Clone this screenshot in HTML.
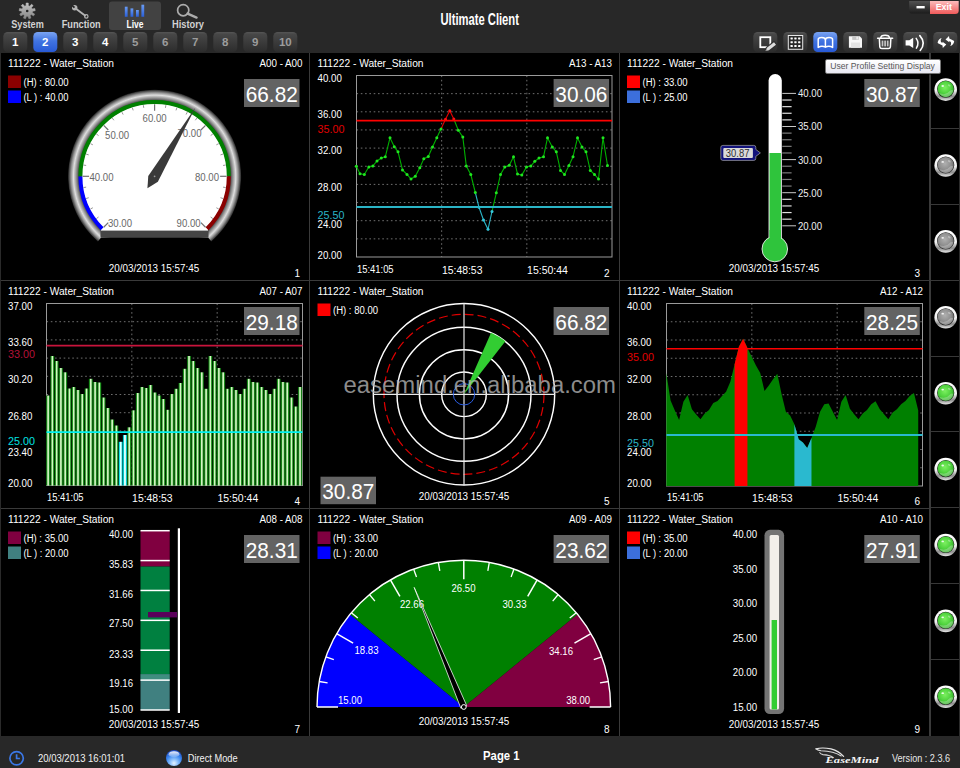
<!DOCTYPE html><html><head><meta charset="utf-8"><title>Ultimate Client</title><style>

html,body{margin:0;padding:0;background:#282828;}
body{width:960px;height:768px;overflow:hidden;position:relative;font-family:"Liberation Sans",sans-serif;color:#fff;}
svg{display:block;font-family:"Liberation Sans",sans-serif;}
#header{position:absolute;left:0;top:0;width:960px;height:53px;background:#282828;}
#main{position:absolute;left:0;top:53px;width:960px;height:683px;background:#3a3a3a;}
.panel{position:absolute;width:309px;height:227px;background:#000;overflow:hidden;}
.ledcol{position:absolute;left:931px;top:53px;width:28px;height:683px;background:#000;}
#footer{position:absolute;left:0;top:736px;width:960px;height:32px;background:#282828;}
#edgeR{position:absolute;left:959px;top:53px;width:1px;height:683px;background:#2c2c2c;}
#edgeL{position:absolute;left:0;top:53px;width:1px;height:683px;background:#2a2a2a;}
#tip{position:absolute;left:825px;top:59px;width:114px;height:13px;background:linear-gradient(#ffffff,#e8e8f2);border:1px solid #767676;border-radius:2px;color:#575757;font-size:9.3px;line-height:12.7px;white-space:nowrap;text-align:center;box-shadow:1px 1px 1px rgba(0,0,0,.5);}
#tip span{display:inline-block;transform:scaleX(0.925);transform-origin:50% 50%;}

</style></head><body>
<div id="header">
<svg width="960" height="53" viewBox="0 0 960 53">
<defs><linearGradient id="btn" x1="0" y1="0" x2="0" y2="1"><stop offset="0" stop-color="#555555"/><stop offset="0.12" stop-color="#474747"/><stop offset="1" stop-color="#2c2c2c"/></linearGradient><linearGradient id="btnb" x1="0" y1="0" x2="0" y2="1"><stop offset="0" stop-color="#7aa4f2"/><stop offset="0.45" stop-color="#4174e2"/><stop offset="1" stop-color="#285ad6"/></linearGradient><linearGradient id="bars" x1="0" y1="0" x2="0" y2="1"><stop offset="0" stop-color="#6a9cf4"/><stop offset="1" stop-color="#2a5fd8"/></linearGradient><linearGradient id="gear" x1="0" y1="0" x2="0" y2="1"><stop offset="0" stop-color="#c4c4c4"/><stop offset="1" stop-color="#868686"/></linearGradient><linearGradient id="minb" x1="0" y1="0" x2="0" y2="1"><stop offset="0" stop-color="#525252"/><stop offset="1" stop-color="#1c1c1c"/></linearGradient><linearGradient id="exb" x1="0" y1="0" x2="0" y2="1"><stop offset="0" stop-color="#fcbcbc"/><stop offset="1" stop-color="#f05a5a"/></linearGradient></defs>
<rect x="109" y="1.5" width="52" height="28.5" rx="3" fill="#424242"/>
<path d="M32.60,11.19 L35.19,10.65 L34.83,8.59 L32.21,8.98 L31.46,7.68 L33.10,5.60 L31.50,4.25 L29.74,6.23 L28.32,5.72 L28.24,3.07 L26.16,3.07 L26.08,5.72 L24.66,6.23 L22.90,4.25 L21.30,5.60 L22.94,7.68 L22.19,8.98 L19.57,8.59 L19.21,10.65 L21.80,11.19 L22.06,12.67 L19.81,14.06 L20.85,15.87 L23.19,14.61 L24.34,15.58 L23.51,18.10 L25.47,18.81 L26.45,16.35 L27.95,16.35 L28.93,18.81 L30.89,18.10 L30.06,15.58 L31.21,14.61 L33.55,15.87 L34.59,14.06 L32.34,12.67 Z" fill="url(#gear)" stroke="url(#gear)" stroke-width="0.6" stroke-linejoin="round"/>
<circle cx="27.2" cy="11" r="1.3" fill="#262626"/>
<g stroke="#b4b4b4" fill="none" stroke-linecap="round"><path d="M75.6,8.6 L85,15.6" stroke-width="1.9"/><circle cx="86.3" cy="16.4" r="1.7" stroke-width="1.2"/></g>
<circle cx="74.7" cy="7.8" r="2.7" fill="#b4b4b4"/><path d="M74.5,7.6 L71.4,4.9" stroke="#262626" stroke-width="1.9"/>
<rect x="124.8" y="6.7" width="2.8" height="10.1" fill="url(#bars)"/>
<rect x="130.5" y="8.4" width="2.8" height="8.4" fill="url(#bars)"/>
<rect x="136" y="10" width="2.8" height="6.8" fill="url(#bars)"/>
<rect x="141.4" y="4.7" width="2.8" height="12.1" fill="url(#bars)"/>
<circle cx="183.2" cy="10.2" r="5.6" fill="none" stroke="#acacac" stroke-width="1.7"/><path d="M187.6,13.6 L196.6,17.6" stroke="#acacac" stroke-width="2.4" stroke-linecap="round"/>
<text x="27.5" y="27.5" font-size="10" fill="#d2d2d2" text-anchor="middle" textLength="32.5" lengthAdjust="spacingAndGlyphs" font-weight="bold">System</text>
<text x="81.2" y="27.5" font-size="10" fill="#d2d2d2" text-anchor="middle" textLength="39" lengthAdjust="spacingAndGlyphs" font-weight="bold">Function</text>
<text x="135" y="27.5" font-size="10" fill="#ffffff" text-anchor="middle" textLength="17" lengthAdjust="spacingAndGlyphs" font-weight="bold">Live</text>
<text x="188" y="27.5" font-size="10" fill="#d2d2d2" text-anchor="middle" textLength="32" lengthAdjust="spacingAndGlyphs" font-weight="bold">History</text>
<rect x="3.3" y="32" width="24" height="20" rx="4.5" fill="url(#btn)"/>
<text x="15.3" y="45.9" font-size="11.5" fill="#fff" text-anchor="middle" font-weight="bold">1</text>
<rect x="33.3" y="32" width="24" height="20" rx="4.5" fill="url(#btnb)"/>
<text x="45.3" y="45.9" font-size="11.5" fill="#fff" text-anchor="middle" font-weight="bold">2</text>
<rect x="63.3" y="32" width="24" height="20" rx="4.5" fill="url(#btn)"/>
<text x="75.3" y="45.9" font-size="11.5" fill="#fff" text-anchor="middle" font-weight="bold">3</text>
<rect x="93.3" y="32" width="24" height="20" rx="4.5" fill="url(#btn)"/>
<text x="105.3" y="45.9" font-size="11.5" fill="#fff" text-anchor="middle" font-weight="bold">4</text>
<rect x="123.3" y="32" width="24" height="20" rx="4.5" fill="url(#btn)"/>
<text x="135.3" y="45.9" font-size="11.5" fill="#9c9c9c" text-anchor="middle" font-weight="bold">5</text>
<rect x="153.3" y="32" width="24" height="20" rx="4.5" fill="url(#btn)"/>
<text x="165.3" y="45.9" font-size="11.5" fill="#9c9c9c" text-anchor="middle" font-weight="bold">6</text>
<rect x="183.3" y="32" width="24" height="20" rx="4.5" fill="url(#btn)"/>
<text x="195.3" y="45.9" font-size="11.5" fill="#9c9c9c" text-anchor="middle" font-weight="bold">7</text>
<rect x="213.3" y="32" width="24" height="20" rx="4.5" fill="url(#btn)"/>
<text x="225.3" y="45.9" font-size="11.5" fill="#9c9c9c" text-anchor="middle" font-weight="bold">8</text>
<rect x="243.3" y="32" width="24" height="20" rx="4.5" fill="url(#btn)"/>
<text x="255.3" y="45.9" font-size="11.5" fill="#9c9c9c" text-anchor="middle" font-weight="bold">9</text>
<rect x="273.3" y="32" width="24" height="20" rx="4.5" fill="url(#btn)"/>
<text x="285.3" y="45.9" font-size="11.5" fill="#9c9c9c" text-anchor="middle" font-weight="bold">10</text>
<text x="479.7" y="24.8" font-size="16.5" fill="#fff" text-anchor="middle" textLength="78.5" lengthAdjust="spacingAndGlyphs" font-weight="bold">Ultimate Client</text>
<path d="M909.2,1 H930 V13.6 H912 Q909.2,13.6 909.2,10.8 Z" fill="url(#minb)"/>
<rect x="916.5" y="6" width="8.2" height="2.4" fill="#fff"/>
<path d="M930,1 H958.7 V10.5 Q958.7,14 955.2,14 H930 Z" fill="url(#exb)"/>
<text x="943.8" y="10.4" font-size="9" fill="#fff" text-anchor="middle" textLength="16.3" lengthAdjust="spacingAndGlyphs" font-weight="bold">Exit</text>
<rect x="753.3" y="32" width="24" height="20" rx="4.5" fill="url(#btn)"/>
<rect x="783.3" y="32" width="24" height="20" rx="4.5" fill="url(#btn)"/>
<rect x="813.3" y="32" width="24" height="20" rx="4.5" fill="url(#btnb)"/>
<rect x="843.3" y="32" width="24" height="20" rx="4.5" fill="url(#btn)"/>
<rect x="873.3" y="32" width="24" height="20" rx="4.5" fill="url(#btn)"/>
<rect x="903.3" y="32" width="24" height="20" rx="4.5" fill="url(#btn)"/>
<rect x="933.3" y="32" width="24" height="20" rx="4.5" fill="url(#btn)"/>
<rect x="760.3" y="37.2" width="10" height="10" fill="none" stroke="#fff" stroke-width="1.8"/>
<path d="M765.6,50.9 L766.9,47.75 L774,42.15 L776,44.65 L768.9,50.25 Z" fill="#2e2e2e" stroke="#2e2e2e" stroke-width="2.2" stroke-linejoin="round"/>
<path d="M765.6,50.9 L766.9,47.75 L774,42.15 L776,44.65 L768.9,50.25 Z" fill="#dcdcdc"/>
<path d="M765.6,50.9 L766.4,48.9 L767.6,50.4 Z" fill="#8a8a8a"/>
<rect x="788.3" y="35.5" width="14.4" height="13.8" fill="#2a2a2a" stroke="#e8e8e8" stroke-width="1"/>
<rect x="790.5" y="37.4" width="2.3" height="2" rx="0.4" fill="#fff"/>
<rect x="794.3" y="37.4" width="2.3" height="2" rx="0.4" fill="#fff"/>
<rect x="798.1" y="37.4" width="2.3" height="2" rx="0.4" fill="#fff"/>
<rect x="790.5" y="41.2" width="2.3" height="2" rx="0.4" fill="#fff"/>
<rect x="794.3" y="41.2" width="2.3" height="2" rx="0.4" fill="#fff"/>
<rect x="798.1" y="41.2" width="2.3" height="2" rx="0.4" fill="#fff"/>
<rect x="790.5" y="45.1" width="2.3" height="2" rx="0.4" fill="#fff"/>
<rect x="794.3" y="45.1" width="2.3" height="2" rx="0.4" fill="#fff"/>
<rect x="798.1" y="45.1" width="2.3" height="2" rx="0.4" fill="#fff"/>
<path d="M818.2,47.4 V39.4 Q818.2,37.6 821.8,37.6 Q825.4,37.6 825.4,40 V47.2 Q821.8,45.4 818.2,47.4 Z M825.4,40 Q825.4,37.6 829,37.6 Q832.6,37.6 832.6,39.4 V47.4 Q829,45.4 825.4,47.2" fill="none" stroke="#fff" stroke-width="1.5" stroke-linejoin="round"/>
<path d="M848.9,36.2 H859.8 L862,38.4 V47.8 H848.9 Z" fill="#f6f6f6"/>
<rect x="852.2" y="36.4" width="6.5" height="3.5" fill="#c4c4c4"/><rect x="856.4" y="36.8" width="1.5" height="2.6" fill="#f0f0f0"/>
<rect x="851" y="42.6" width="9" height="5.2" fill="#e2e2e2"/>
<g fill="none" stroke="#fff" stroke-width="1.5" stroke-linecap="round" stroke-linejoin="round"><path d="M877.6,38.3 H892.6"/><path d="M880.8,38 Q880.8,35.3 885.1,35.3 Q889.4,35.3 889.4,38"/><path d="M879.4,39.2 L879.8,46.8 Q880,48.6 881.8,48.6 H888.4 Q890.2,48.6 890.4,46.8 L890.8,39.2"/></g>
<rect x="881.65" y="40.6" width="1.7" height="5.8" fill="#c4c4c4"/>
<rect x="884.25" y="40.6" width="1.7" height="5.8" fill="#c4c4c4"/>
<rect x="886.85" y="40.6" width="1.7" height="5.8" fill="#c4c4c4"/>
<path d="M905.6,40.2 H909.3 L913.2,37.8 V48 L909.3,45.6 H905.6 Z" fill="#fff"/>
<path d="M916.2,38.4 Q919.6,43.2 916.4,48.2" fill="none" stroke="#fff" stroke-width="1.5" stroke-linecap="round"/>
<path d="M919.8,35.6 Q926.4,43 920.2,50.4" fill="none" stroke="#fff" stroke-width="1.6" stroke-linecap="round"/>
<g transform="translate(945.9 42)"><path d="M-4.2,-4.1 Q-7.4,-3.2 -8.3,0.4 Q-8.2,1.4 -6.9,1.8 L-3.4,3.4 L-3.1,5.9 L0.4,2.4 L-3.4,-0.2 L-3.4,1 Q-5.6,0.4 -5.2,-1.8 Q-5,-3.2 -4.2,-4.1 Z" fill="#fff"/><path d="M-4.2,-4.1 Q-7.4,-3.2 -8.3,0.4 Q-8.2,1.4 -6.9,1.8 L-3.4,3.4 L-3.1,5.9 L0.4,2.4 L-3.4,-0.2 L-3.4,1 Q-5.6,0.4 -5.2,-1.8 Q-5,-3.2 -4.2,-4.1 Z" fill="#fff" transform="rotate(180)"/></g>
</svg></div>
<div id="main"></div>
<div class="panel" style="left:0px;top:53px"><svg width="309" height="227" viewBox="0 53 309 227">
<defs><radialGradient id="bez" cx="154.6" cy="176.3" r="86.5" gradientUnits="userSpaceOnUse"><stop offset="0.872" stop-color="#3a3a3a"/><stop offset="0.9" stop-color="#858585"/><stop offset="0.938" stop-color="#dedede"/><stop offset="0.968" stop-color="#8e8e8e"/><stop offset="1" stop-color="#262626"/></radialGradient></defs>
<path d="M97.85,241.58 A86.5,86.5 0 1 1 211.35,241.58 L208.1,237.6 L101.1,237.6 Z" fill="url(#bez)"/>
<path d="M105.75,230.55 A73,73 0 1 1 203.45,230.55 Z" fill="#fff"/>
<rect x="101" y="225" width="107" height="6" fill="#fff"/>
<rect x="100.5" y="230.6" width="108" height="7" fill="#454545"/>
<path d="M102.13,228.77 A74.2,74.2 0 0 1 80.40,176.30" stroke="#0000ff" stroke-width="4" fill="none"/>
<path d="M80.40,176.30 A74.2,74.2 0 0 1 228.80,176.30" stroke="#008000" stroke-width="4" fill="none"/>
<path d="M228.80,176.30 A74.2,74.2 0 0 1 207.07,228.77" stroke="#8b0000" stroke-width="4" fill="none"/>
<line x1="108.28" y1="222.62" x2="103.69" y2="227.21" stroke="#707070" stroke-width="1.2"/>
<line x1="98.54" y1="217.03" x2="96.35" y2="218.62" stroke="#8a8a8a" stroke-width="0.9"/>
<line x1="92.85" y1="207.76" x2="90.45" y2="208.99" stroke="#8a8a8a" stroke-width="0.9"/>
<line x1="88.69" y1="197.71" x2="86.12" y2="198.55" stroke="#8a8a8a" stroke-width="0.9"/>
<line x1="86.15" y1="187.14" x2="83.49" y2="187.56" stroke="#8a8a8a" stroke-width="0.9"/>
<line x1="89.10" y1="176.30" x2="82.60" y2="176.30" stroke="#707070" stroke-width="1.2"/>
<line x1="86.15" y1="165.46" x2="83.49" y2="165.04" stroke="#8a8a8a" stroke-width="0.9"/>
<line x1="88.69" y1="154.89" x2="86.12" y2="154.05" stroke="#8a8a8a" stroke-width="0.9"/>
<line x1="92.85" y1="144.84" x2="90.45" y2="143.61" stroke="#8a8a8a" stroke-width="0.9"/>
<line x1="98.54" y1="135.57" x2="96.35" y2="133.98" stroke="#8a8a8a" stroke-width="0.9"/>
<line x1="108.28" y1="129.98" x2="103.69" y2="125.39" stroke="#707070" stroke-width="1.2"/>
<line x1="113.87" y1="120.24" x2="112.28" y2="118.05" stroke="#8a8a8a" stroke-width="0.9"/>
<line x1="123.14" y1="114.55" x2="121.91" y2="112.15" stroke="#8a8a8a" stroke-width="0.9"/>
<line x1="133.19" y1="110.39" x2="132.35" y2="107.82" stroke="#8a8a8a" stroke-width="0.9"/>
<line x1="143.76" y1="107.85" x2="143.34" y2="105.19" stroke="#8a8a8a" stroke-width="0.9"/>
<line x1="154.60" y1="110.80" x2="154.60" y2="104.30" stroke="#707070" stroke-width="1.2"/>
<line x1="165.44" y1="107.85" x2="165.86" y2="105.19" stroke="#8a8a8a" stroke-width="0.9"/>
<line x1="176.01" y1="110.39" x2="176.85" y2="107.82" stroke="#8a8a8a" stroke-width="0.9"/>
<line x1="186.06" y1="114.55" x2="187.29" y2="112.15" stroke="#8a8a8a" stroke-width="0.9"/>
<line x1="195.33" y1="120.24" x2="196.92" y2="118.05" stroke="#8a8a8a" stroke-width="0.9"/>
<line x1="200.92" y1="129.98" x2="205.51" y2="125.39" stroke="#707070" stroke-width="1.2"/>
<line x1="210.66" y1="135.57" x2="212.85" y2="133.98" stroke="#8a8a8a" stroke-width="0.9"/>
<line x1="216.35" y1="144.84" x2="218.75" y2="143.61" stroke="#8a8a8a" stroke-width="0.9"/>
<line x1="220.51" y1="154.89" x2="223.08" y2="154.05" stroke="#8a8a8a" stroke-width="0.9"/>
<line x1="223.05" y1="165.46" x2="225.71" y2="165.04" stroke="#8a8a8a" stroke-width="0.9"/>
<line x1="220.10" y1="176.30" x2="226.60" y2="176.30" stroke="#707070" stroke-width="1.2"/>
<line x1="223.05" y1="187.14" x2="225.71" y2="187.56" stroke="#8a8a8a" stroke-width="0.9"/>
<line x1="220.51" y1="197.71" x2="223.08" y2="198.55" stroke="#8a8a8a" stroke-width="0.9"/>
<line x1="216.35" y1="207.76" x2="218.75" y2="208.99" stroke="#8a8a8a" stroke-width="0.9"/>
<line x1="210.66" y1="217.03" x2="212.85" y2="218.62" stroke="#8a8a8a" stroke-width="0.9"/>
<line x1="200.92" y1="222.62" x2="205.51" y2="227.21" stroke="#707070" stroke-width="1.2"/>
<text x="154.6" y="122.2" font-size="10" fill="#686868" text-anchor="middle" textLength="24" lengthAdjust="spacingAndGlyphs">60.00</text>
<text x="117.1" y="138.9" font-size="10" fill="#686868" text-anchor="middle" textLength="24" lengthAdjust="spacingAndGlyphs">50.00</text>
<text x="101.5" y="180.9" font-size="10" fill="#686868" text-anchor="middle" textLength="24" lengthAdjust="spacingAndGlyphs">40.00</text>
<text x="120" y="227.0" font-size="10" fill="#686868" text-anchor="middle" textLength="24" lengthAdjust="spacingAndGlyphs">30.00</text>
<text x="189.5" y="136.5" font-size="10" fill="#686868" text-anchor="middle" textLength="24" lengthAdjust="spacingAndGlyphs">70.00</text>
<text x="207" y="180.9" font-size="10" fill="#686868" text-anchor="middle" textLength="24" lengthAdjust="spacingAndGlyphs">80.00</text>
<text x="188.6" y="227.0" font-size="10" fill="#686868" text-anchor="middle" textLength="24" lengthAdjust="spacingAndGlyphs">90.00</text>
<path d="M195.44,107.51 L148.25,176.02 L147.45,188.34 L157.88,181.74 Z" fill="#3a3a3a"/>
<circle cx="154.6" cy="176.3" r="0.9" fill="#999"/>
<text x="8" y="67" font-size="10" fill="#fff" textLength="106" lengthAdjust="spacingAndGlyphs">111222 - Water_Station</text>
<text x="302.5" y="67" font-size="10" fill="#fff" text-anchor="end" textLength="43" lengthAdjust="spacingAndGlyphs">A00 - A00</text>
<rect x="8" y="75.5" width="13" height="12.5" fill="#8b0000"/>
<text x="23.5" y="85.5" font-size="10" fill="#fff" textLength="45" lengthAdjust="spacingAndGlyphs">(H) : 80.00</text>
<rect x="8" y="90.5" width="13" height="12.5" fill="#0000ff"/>
<text x="23.5" y="100.5" font-size="10" fill="#fff" textLength="45" lengthAdjust="spacingAndGlyphs">(L ) : 40.00</text>
<rect x="244" y="79" width="55.5" height="28" fill="#636363"/>
<text x="271.75" y="101.5" font-size="21.5" fill="#fff" text-anchor="middle" textLength="52" lengthAdjust="spacingAndGlyphs">66.82</text>
<text x="154" y="272" font-size="10" fill="#fff" text-anchor="middle" textLength="90.5" lengthAdjust="spacingAndGlyphs">20/03/2013 15:57:45</text>
<text x="300" y="276.5" font-size="10" fill="#fff" text-anchor="end">1</text>
</svg></div>
<div class="panel" style="left:310px;top:53px"><svg width="309" height="227" viewBox="310 53 309 227">
<line x1="356.5" y1="93.65" x2="612" y2="93.65" stroke="#8c8c8c" stroke-width="0.8" stroke-dasharray="1.6,2.7"/>
<line x1="356.5" y1="111.80" x2="612" y2="111.80" stroke="#8c8c8c" stroke-width="0.8" stroke-dasharray="1.6,2.7"/>
<line x1="356.5" y1="129.95" x2="612" y2="129.95" stroke="#8c8c8c" stroke-width="0.8" stroke-dasharray="1.6,2.7"/>
<line x1="356.5" y1="148.10" x2="612" y2="148.10" stroke="#8c8c8c" stroke-width="0.8" stroke-dasharray="1.6,2.7"/>
<line x1="356.5" y1="166.25" x2="612" y2="166.25" stroke="#8c8c8c" stroke-width="0.8" stroke-dasharray="1.6,2.7"/>
<line x1="356.5" y1="184.40" x2="612" y2="184.40" stroke="#8c8c8c" stroke-width="0.8" stroke-dasharray="1.6,2.7"/>
<line x1="356.5" y1="202.55" x2="612" y2="202.55" stroke="#8c8c8c" stroke-width="0.8" stroke-dasharray="1.6,2.7"/>
<line x1="356.5" y1="220.70" x2="612" y2="220.70" stroke="#8c8c8c" stroke-width="0.8" stroke-dasharray="1.6,2.7"/>
<line x1="356.5" y1="238.85" x2="612" y2="238.85" stroke="#8c8c8c" stroke-width="0.8" stroke-dasharray="1.6,2.7"/>
<line x1="441.67" y1="75.5" x2="441.67" y2="257" stroke="#8c8c8c" stroke-width="0.8" stroke-dasharray="1.6,2.7"/>
<line x1="526.83" y1="75.5" x2="526.83" y2="257" stroke="#8c8c8c" stroke-width="0.8" stroke-dasharray="1.6,2.7"/>
<rect x="356.5" y="75.5" width="255.5" height="181.5" fill="none" stroke="#9a9a9a" stroke-width="1"/>
<path d="M356.3,166.3 L360,173.8 L364.3,174.5 L368.8,167 L372.8,166 L377,161 L381.3,158 L385.3,156.8 L390,137.8 L394.3,146.8 L398,151.8 L402.5,170 L407,174.5 L411,179 L415.3,176.3 L419.8,167.8 L423.8,158.8 L428.3,156.5 L432.5,147 L436.8,137.8 L441,129" fill="none" stroke="#00b000" stroke-width="1.1"/>
<path d="M441,129 L445.5,119.2 L449.8,110.8 L453.8,119" fill="none" stroke="#e60000" stroke-width="1.1"/>
<path d="M453.8,119 L458.3,130.3 L462.8,137 L466.3,166 L470.8,174.5 L475.3,192.5" fill="none" stroke="#00b000" stroke-width="1.1"/>
<path d="M475.3,192.5 L479,207.3 L483.5,220 L488,229.3 L492,211.5" fill="none" stroke="#2ab4c6" stroke-width="1.1"/>
<path d="M492,211.5 L496.3,192.8 L500.5,174.5 L504.8,167 L509.3,165.3 L513.5,156.8 L517.5,174 L521.8,175 L526.5,167 L530.8,166 L534.8,161.3 L539,158 L543.5,156.8 L547.5,137.8 L552.3,147 L556.3,151.8 L560.5,170.5 L564.5,174.5 L569,165.5 L573,156.8 L577.5,137.8 L582,147 L586,151.8 L590.3,170.5 L594.5,174.5 L598.5,179 L603,137.8 L607.5,165.5" fill="none" stroke="#00b000" stroke-width="1.1"/>
<circle cx="356.3" cy="166.3" r="1.5" fill="#20e620"/>
<circle cx="360" cy="173.8" r="1.5" fill="#20e620"/>
<circle cx="364.3" cy="174.5" r="1.5" fill="#20e620"/>
<circle cx="368.8" cy="167" r="1.5" fill="#20e620"/>
<circle cx="372.8" cy="166" r="1.5" fill="#20e620"/>
<circle cx="377" cy="161" r="1.5" fill="#20e620"/>
<circle cx="381.3" cy="158" r="1.5" fill="#20e620"/>
<circle cx="385.3" cy="156.8" r="1.5" fill="#20e620"/>
<circle cx="390" cy="137.8" r="1.5" fill="#20e620"/>
<circle cx="394.3" cy="146.8" r="1.5" fill="#20e620"/>
<circle cx="398" cy="151.8" r="1.5" fill="#20e620"/>
<circle cx="402.5" cy="170" r="1.5" fill="#20e620"/>
<circle cx="407" cy="174.5" r="1.5" fill="#20e620"/>
<circle cx="411" cy="179" r="1.5" fill="#20e620"/>
<circle cx="415.3" cy="176.3" r="1.5" fill="#20e620"/>
<circle cx="419.8" cy="167.8" r="1.5" fill="#20e620"/>
<circle cx="423.8" cy="158.8" r="1.5" fill="#20e620"/>
<circle cx="428.3" cy="156.5" r="1.5" fill="#20e620"/>
<circle cx="432.5" cy="147" r="1.5" fill="#20e620"/>
<circle cx="436.8" cy="137.8" r="1.5" fill="#20e620"/>
<circle cx="441" cy="129" r="1.5" fill="#20e620"/>
<circle cx="445.5" cy="119.2" r="1.5" fill="#ff1010"/>
<circle cx="449.8" cy="110.8" r="1.5" fill="#ff1010"/>
<circle cx="453.8" cy="119" r="1.5" fill="#ff1010"/>
<circle cx="458.3" cy="130.3" r="1.5" fill="#20e620"/>
<circle cx="462.8" cy="137" r="1.5" fill="#20e620"/>
<circle cx="466.3" cy="166" r="1.5" fill="#20e620"/>
<circle cx="470.8" cy="174.5" r="1.5" fill="#20e620"/>
<circle cx="475.3" cy="192.5" r="1.5" fill="#20e620"/>
<circle cx="479" cy="207.3" r="1.5" fill="#35c8dc"/>
<circle cx="483.5" cy="220" r="1.5" fill="#35c8dc"/>
<circle cx="488" cy="229.3" r="1.5" fill="#35c8dc"/>
<circle cx="492" cy="211.5" r="1.5" fill="#35c8dc"/>
<circle cx="496.3" cy="192.8" r="1.5" fill="#20e620"/>
<circle cx="500.5" cy="174.5" r="1.5" fill="#20e620"/>
<circle cx="504.8" cy="167" r="1.5" fill="#20e620"/>
<circle cx="509.3" cy="165.3" r="1.5" fill="#20e620"/>
<circle cx="513.5" cy="156.8" r="1.5" fill="#20e620"/>
<circle cx="517.5" cy="174" r="1.5" fill="#20e620"/>
<circle cx="521.8" cy="175" r="1.5" fill="#20e620"/>
<circle cx="526.5" cy="167" r="1.5" fill="#20e620"/>
<circle cx="530.8" cy="166" r="1.5" fill="#20e620"/>
<circle cx="534.8" cy="161.3" r="1.5" fill="#20e620"/>
<circle cx="539" cy="158" r="1.5" fill="#20e620"/>
<circle cx="543.5" cy="156.8" r="1.5" fill="#20e620"/>
<circle cx="547.5" cy="137.8" r="1.5" fill="#20e620"/>
<circle cx="552.3" cy="147" r="1.5" fill="#20e620"/>
<circle cx="556.3" cy="151.8" r="1.5" fill="#20e620"/>
<circle cx="560.5" cy="170.5" r="1.5" fill="#20e620"/>
<circle cx="564.5" cy="174.5" r="1.5" fill="#20e620"/>
<circle cx="569" cy="165.5" r="1.5" fill="#20e620"/>
<circle cx="573" cy="156.8" r="1.5" fill="#20e620"/>
<circle cx="577.5" cy="137.8" r="1.5" fill="#20e620"/>
<circle cx="582" cy="147" r="1.5" fill="#20e620"/>
<circle cx="586" cy="151.8" r="1.5" fill="#20e620"/>
<circle cx="590.3" cy="170.5" r="1.5" fill="#20e620"/>
<circle cx="594.5" cy="174.5" r="1.5" fill="#20e620"/>
<circle cx="598.5" cy="179" r="1.5" fill="#20e620"/>
<circle cx="603" cy="137.8" r="1.5" fill="#20e620"/>
<circle cx="607.5" cy="165.5" r="1.5" fill="#20e620"/>
<line x1="356.5" y1="120.7" x2="612" y2="120.7" stroke="#ff0000" stroke-width="1.8"/>
<line x1="356.5" y1="207" x2="612" y2="207" stroke="#2ab4c6" stroke-width="1.8"/>
<text x="317.5" y="81.89999999999999" font-size="10" fill="#fff" textLength="24.3" lengthAdjust="spacingAndGlyphs">40.00</text>
<text x="317.5" y="117.6" font-size="10" fill="#fff" textLength="24.3" lengthAdjust="spacingAndGlyphs">36.00</text>
<text x="317.5" y="154.29999999999998" font-size="10" fill="#fff" textLength="24.3" lengthAdjust="spacingAndGlyphs">32.00</text>
<text x="317.5" y="190.5" font-size="10" fill="#fff" textLength="24.3" lengthAdjust="spacingAndGlyphs">28.00</text>
<text x="317.5" y="227.6" font-size="10" fill="#fff" textLength="24.3" lengthAdjust="spacingAndGlyphs">24.00</text>
<text x="317.5" y="258.6" font-size="10" fill="#fff" textLength="24.3" lengthAdjust="spacingAndGlyphs">20.00</text>
<text x="317.5" y="132.8" font-size="10.5" fill="#e00000" textLength="27" lengthAdjust="spacingAndGlyphs">35.00</text>
<text x="317.5" y="218.8" font-size="10.5" fill="#2ab4c6" textLength="27" lengthAdjust="spacingAndGlyphs">25.50</text>
<text x="357.0" y="272.6" font-size="10.2" fill="#fff" textLength="36.6" lengthAdjust="spacingAndGlyphs">15:41:05</text>
<text x="441.9666666666667" y="273.6" font-size="10" fill="#fff" textLength="40.5" lengthAdjust="spacingAndGlyphs">15:48:53</text>
<text x="527.1333333333333" y="273.6" font-size="10" fill="#fff" textLength="40.8" lengthAdjust="spacingAndGlyphs">15:50:44</text>
<text x="317.5" y="67" font-size="10" fill="#fff" textLength="106" lengthAdjust="spacingAndGlyphs">111222 - Water_Station</text>
<text x="612" y="67" font-size="10" fill="#fff" text-anchor="end" textLength="43" lengthAdjust="spacingAndGlyphs">A13 - A13</text>
<rect x="553.6" y="79" width="55.5" height="28" fill="#636363"/>
<text x="581.35" y="101.5" font-size="21.5" fill="#fff" text-anchor="middle" textLength="52" lengthAdjust="spacingAndGlyphs">30.06</text>
<text x="609.5" y="276.5" font-size="10" fill="#fff" text-anchor="end">2</text>
</svg></div>
<div class="panel" style="left:620px;top:53px"><svg width="309" height="227" viewBox="620 53 309 227">
<rect x="768.6" y="74" width="13.2" height="180" rx="6.6" fill="#fff"/>
<rect x="769.5" y="153" width="11.4" height="100" fill="#2fc43c"/>
<circle cx="774.8" cy="249" r="12.8" fill="#2fc43c" stroke="#fff" stroke-width="0.8"/>
<rect x="769.5" y="230" width="11.4" height="12" fill="#2fc43c"/>
<line x1="782.3" y1="225.80" x2="796" y2="225.80" stroke="#c8c8c8" stroke-width="1"/>
<text x="798" y="229.70000000000002" font-size="10" fill="#f0f0f0" textLength="24" lengthAdjust="spacingAndGlyphs">20.00</text>
<line x1="782.3" y1="219.18" x2="791.6" y2="219.18" stroke="#e0e0e0" stroke-width="1.2"/>
<line x1="782.3" y1="212.56" x2="791.6" y2="212.56" stroke="#e0e0e0" stroke-width="1.2"/>
<line x1="782.3" y1="205.94" x2="791.6" y2="205.94" stroke="#e0e0e0" stroke-width="1.2"/>
<line x1="782.3" y1="199.32" x2="791.6" y2="199.32" stroke="#e0e0e0" stroke-width="1.2"/>
<line x1="782.3" y1="192.70" x2="796" y2="192.70" stroke="#c8c8c8" stroke-width="1"/>
<text x="798" y="196.60000000000002" font-size="10" fill="#f0f0f0" textLength="24" lengthAdjust="spacingAndGlyphs">25.00</text>
<line x1="782.3" y1="186.08" x2="791.6" y2="186.08" stroke="#7c7c7c" stroke-width="1.2"/>
<line x1="782.3" y1="179.46" x2="791.6" y2="179.46" stroke="#7c7c7c" stroke-width="1.2"/>
<line x1="782.3" y1="172.84" x2="791.6" y2="172.84" stroke="#7c7c7c" stroke-width="1.2"/>
<line x1="782.3" y1="166.22" x2="791.6" y2="166.22" stroke="#7c7c7c" stroke-width="1.2"/>
<line x1="782.3" y1="159.60" x2="796" y2="159.60" stroke="#c8c8c8" stroke-width="1"/>
<text x="798" y="163.50000000000003" font-size="10" fill="#f0f0f0" textLength="24" lengthAdjust="spacingAndGlyphs">30.00</text>
<line x1="782.3" y1="152.98" x2="791.6" y2="152.98" stroke="#7c7c7c" stroke-width="1.2"/>
<line x1="782.3" y1="146.36" x2="791.6" y2="146.36" stroke="#7c7c7c" stroke-width="1.2"/>
<line x1="782.3" y1="139.74" x2="791.6" y2="139.74" stroke="#7c7c7c" stroke-width="1.2"/>
<line x1="782.3" y1="133.12" x2="791.6" y2="133.12" stroke="#7c7c7c" stroke-width="1.2"/>
<line x1="782.3" y1="126.50" x2="796" y2="126.50" stroke="#c8c8c8" stroke-width="1"/>
<text x="798" y="130.4" font-size="10" fill="#f0f0f0" textLength="24" lengthAdjust="spacingAndGlyphs">35.00</text>
<line x1="782.3" y1="119.88" x2="791.6" y2="119.88" stroke="#e0e0e0" stroke-width="1.2"/>
<line x1="782.3" y1="113.26" x2="791.6" y2="113.26" stroke="#e0e0e0" stroke-width="1.2"/>
<line x1="782.3" y1="106.64" x2="791.6" y2="106.64" stroke="#e0e0e0" stroke-width="1.2"/>
<line x1="782.3" y1="100.02" x2="791.6" y2="100.02" stroke="#e0e0e0" stroke-width="1.2"/>
<line x1="782.3" y1="93.40" x2="796" y2="93.40" stroke="#c8c8c8" stroke-width="1"/>
<text x="798" y="97.30000000000001" font-size="10" fill="#f0f0f0" textLength="24" lengthAdjust="spacingAndGlyphs">40.00</text>
<path d="M722.8,145.4 H753.8 Q755.8,145.4 755.8,147.4 V149.4 L760.4,152.9 L755.8,156.4 V158.4 Q755.8,160.4 753.8,160.4 H722.8 Q720.8,160.4 720.8,158.4 V147.4 Q720.8,145.4 722.8,145.4 Z" fill="#12127c" stroke="#a8a8a8" stroke-width="0.7"/>
<rect x="723.3" y="148" width="29.6" height="10" rx="1" fill="#dadada"/>
<text x="737.6" y="156.6" font-size="10" fill="#303030" text-anchor="middle" textLength="23.6" lengthAdjust="spacingAndGlyphs">30.87</text>
<text x="627" y="67" font-size="10" fill="#fff" textLength="106" lengthAdjust="spacingAndGlyphs">111222 - Water_Station</text>
<rect x="627" y="75.5" width="13" height="12.5" fill="#ff0000"/>
<text x="642.5" y="85.5" font-size="10" fill="#fff" textLength="45" lengthAdjust="spacingAndGlyphs">(H) : 33.00</text>
<rect x="627" y="90.5" width="13" height="12.5" fill="#3c6fdc"/>
<text x="642.5" y="100.5" font-size="10" fill="#fff" textLength="45" lengthAdjust="spacingAndGlyphs">(L ) : 25.00</text>
<rect x="864.3" y="79" width="55.5" height="28" fill="#636363"/>
<text x="892.05" y="101.5" font-size="21.5" fill="#fff" text-anchor="middle" textLength="52" lengthAdjust="spacingAndGlyphs">30.87</text>
<text x="774" y="272" font-size="10" fill="#fff" text-anchor="middle" textLength="90.5" lengthAdjust="spacingAndGlyphs">20/03/2013 15:57:45</text>
<text x="920" y="276.5" font-size="10" fill="#fff" text-anchor="end">3</text>
</svg></div>
<div class="panel" style="left:0px;top:281px"><svg width="309" height="227" viewBox="0 281 309 227">
<defs><linearGradient id="bg4" x1="0" x2="1" y1="0" y2="0"><stop offset="0" stop-color="#003a00"/><stop offset="0.22" stop-color="#1f961f"/><stop offset="0.42" stop-color="#d6f4c6"/><stop offset="0.58" stop-color="#d6f4c6"/><stop offset="0.78" stop-color="#1f961f"/><stop offset="1" stop-color="#003a00"/></linearGradient><linearGradient id="bc4" x1="0" x2="1" y1="0" y2="0"><stop offset="0" stop-color="#007070"/><stop offset="0.2" stop-color="#00e4e4"/><stop offset="0.4" stop-color="#e6ffff"/><stop offset="0.6" stop-color="#e6ffff"/><stop offset="0.8" stop-color="#00e4e4"/><stop offset="1" stop-color="#007070"/></linearGradient></defs>
<line x1="46.5" y1="321.70" x2="302.5" y2="321.70" stroke="#8c8c8c" stroke-width="0.8" stroke-dasharray="1.6,2.7"/>
<line x1="46.5" y1="339.90" x2="302.5" y2="339.90" stroke="#8c8c8c" stroke-width="0.8" stroke-dasharray="1.6,2.7"/>
<line x1="46.5" y1="358.10" x2="302.5" y2="358.10" stroke="#8c8c8c" stroke-width="0.8" stroke-dasharray="1.6,2.7"/>
<line x1="46.5" y1="376.30" x2="302.5" y2="376.30" stroke="#8c8c8c" stroke-width="0.8" stroke-dasharray="1.6,2.7"/>
<line x1="46.5" y1="394.50" x2="302.5" y2="394.50" stroke="#8c8c8c" stroke-width="0.8" stroke-dasharray="1.6,2.7"/>
<line x1="46.5" y1="412.70" x2="302.5" y2="412.70" stroke="#8c8c8c" stroke-width="0.8" stroke-dasharray="1.6,2.7"/>
<line x1="46.5" y1="430.90" x2="302.5" y2="430.90" stroke="#8c8c8c" stroke-width="0.8" stroke-dasharray="1.6,2.7"/>
<line x1="46.5" y1="449.10" x2="302.5" y2="449.10" stroke="#8c8c8c" stroke-width="0.8" stroke-dasharray="1.6,2.7"/>
<line x1="46.5" y1="467.30" x2="302.5" y2="467.30" stroke="#8c8c8c" stroke-width="0.8" stroke-dasharray="1.6,2.7"/>
<line x1="131.83" y1="303.5" x2="131.83" y2="485.5" stroke="#8c8c8c" stroke-width="0.8" stroke-dasharray="1.6,2.7"/>
<line x1="217.17" y1="303.5" x2="217.17" y2="485.5" stroke="#8c8c8c" stroke-width="0.8" stroke-dasharray="1.6,2.7"/>
<rect x="46.5" y="303.5" width="256.0" height="182.0" fill="none" stroke="#9a9a9a" stroke-width="1"/>
<rect x="45.97" y="395.5" width="4.27" height="90.00" fill="url(#bg4)"/>
<rect x="50.24" y="356" width="4.27" height="129.50" fill="url(#bg4)"/>
<rect x="54.51" y="361" width="4.27" height="124.50" fill="url(#bg4)"/>
<rect x="58.78" y="368" width="4.27" height="117.50" fill="url(#bg4)"/>
<rect x="63.05" y="372.3" width="4.27" height="113.20" fill="url(#bg4)"/>
<rect x="67.32" y="388.5" width="4.27" height="97.00" fill="url(#bg4)"/>
<rect x="71.59" y="387" width="4.27" height="98.50" fill="url(#bg4)"/>
<rect x="75.86" y="390" width="4.27" height="95.50" fill="url(#bg4)"/>
<rect x="80.13" y="394" width="4.27" height="91.50" fill="url(#bg4)"/>
<rect x="84.40" y="388.5" width="4.27" height="97.00" fill="url(#bg4)"/>
<rect x="88.67" y="378.8" width="4.27" height="106.70" fill="url(#bg4)"/>
<rect x="92.94" y="382" width="4.27" height="103.50" fill="url(#bg4)"/>
<rect x="97.21" y="382.5" width="4.27" height="103.00" fill="url(#bg4)"/>
<rect x="101.48" y="397.5" width="4.27" height="88.00" fill="url(#bg4)"/>
<rect x="105.75" y="408" width="4.27" height="77.50" fill="url(#bg4)"/>
<rect x="110.02" y="419.5" width="4.27" height="66.00" fill="url(#bg4)"/>
<rect x="114.29" y="425.5" width="4.27" height="60.00" fill="url(#bg4)"/>
<rect x="118.56" y="441.8" width="4.27" height="43.70" fill="url(#bc4)"/>
<rect x="122.83" y="435" width="4.27" height="50.50" fill="url(#bc4)"/>
<rect x="127.10" y="427.3" width="4.27" height="58.20" fill="url(#bg4)"/>
<rect x="131.37" y="410.3" width="4.27" height="75.20" fill="url(#bg4)"/>
<rect x="135.64" y="393" width="4.27" height="92.50" fill="url(#bg4)"/>
<rect x="139.91" y="387" width="4.27" height="98.50" fill="url(#bg4)"/>
<rect x="144.18" y="388" width="4.27" height="97.50" fill="url(#bg4)"/>
<rect x="148.45" y="385" width="4.27" height="100.50" fill="url(#bg4)"/>
<rect x="152.72" y="392.5" width="4.27" height="93.00" fill="url(#bg4)"/>
<rect x="156.99" y="395.5" width="4.27" height="90.00" fill="url(#bg4)"/>
<rect x="161.26" y="399" width="4.27" height="86.50" fill="url(#bg4)"/>
<rect x="165.53" y="409.8" width="4.27" height="75.70" fill="url(#bg4)"/>
<rect x="169.80" y="394" width="4.27" height="91.50" fill="url(#bg4)"/>
<rect x="174.07" y="388.8" width="4.27" height="96.70" fill="url(#bg4)"/>
<rect x="178.34" y="383" width="4.27" height="102.50" fill="url(#bg4)"/>
<rect x="182.61" y="368.8" width="4.27" height="116.70" fill="url(#bg4)"/>
<rect x="186.88" y="356" width="4.27" height="129.50" fill="url(#bg4)"/>
<rect x="191.15" y="361" width="4.27" height="124.50" fill="url(#bg4)"/>
<rect x="195.42" y="368" width="4.27" height="117.50" fill="url(#bg4)"/>
<rect x="199.69" y="372.3" width="4.27" height="113.20" fill="url(#bg4)"/>
<rect x="203.96" y="388.8" width="4.27" height="96.70" fill="url(#bg4)"/>
<rect x="208.23" y="356" width="4.27" height="129.50" fill="url(#bg4)"/>
<rect x="212.50" y="361" width="4.27" height="124.50" fill="url(#bg4)"/>
<rect x="216.77" y="368" width="4.27" height="117.50" fill="url(#bg4)"/>
<rect x="221.04" y="372.3" width="4.27" height="113.20" fill="url(#bg4)"/>
<rect x="225.31" y="388.8" width="4.27" height="96.70" fill="url(#bg4)"/>
<rect x="229.58" y="387" width="4.27" height="98.50" fill="url(#bg4)"/>
<rect x="233.85" y="390" width="4.27" height="95.50" fill="url(#bg4)"/>
<rect x="238.12" y="394" width="4.27" height="91.50" fill="url(#bg4)"/>
<rect x="242.39" y="388.8" width="4.27" height="96.70" fill="url(#bg4)"/>
<rect x="246.66" y="378.8" width="4.27" height="106.70" fill="url(#bg4)"/>
<rect x="250.93" y="382" width="4.27" height="103.50" fill="url(#bg4)"/>
<rect x="255.20" y="382.5" width="4.27" height="103.00" fill="url(#bg4)"/>
<rect x="259.47" y="387" width="4.27" height="98.50" fill="url(#bg4)"/>
<rect x="263.74" y="390" width="4.27" height="95.50" fill="url(#bg4)"/>
<rect x="268.01" y="394" width="4.27" height="91.50" fill="url(#bg4)"/>
<rect x="272.28" y="388.8" width="4.27" height="96.70" fill="url(#bg4)"/>
<rect x="276.55" y="378.8" width="4.27" height="106.70" fill="url(#bg4)"/>
<rect x="280.82" y="382" width="4.27" height="103.50" fill="url(#bg4)"/>
<rect x="285.09" y="382.5" width="4.27" height="103.00" fill="url(#bg4)"/>
<rect x="289.36" y="397.5" width="4.27" height="88.00" fill="url(#bg4)"/>
<rect x="293.63" y="406.5" width="4.27" height="79.00" fill="url(#bg4)"/>
<rect x="297.90" y="387" width="4.27" height="98.50" fill="url(#bg4)"/>
<line x1="46.5" y1="345.7" x2="302.5" y2="345.7" stroke="#c8143c" stroke-width="1.8"/>
<line x1="46.5" y1="432.2" x2="302.5" y2="432.2" stroke="#00f0f0" stroke-width="1.8"/>
<text x="8" y="310.3" font-size="10" fill="#fff" textLength="24.3" lengthAdjust="spacingAndGlyphs">37.00</text>
<text x="8" y="345.90000000000003" font-size="10" fill="#fff" textLength="24.3" lengthAdjust="spacingAndGlyphs">33.60</text>
<text x="8" y="382.6" font-size="10" fill="#fff" textLength="24.3" lengthAdjust="spacingAndGlyphs">30.20</text>
<text x="8" y="419.6" font-size="10" fill="#fff" textLength="24.3" lengthAdjust="spacingAndGlyphs">26.80</text>
<text x="8" y="456.1" font-size="10" fill="#fff" textLength="24.3" lengthAdjust="spacingAndGlyphs">23.40</text>
<text x="8" y="487.1" font-size="10" fill="#fff" textLength="24.3" lengthAdjust="spacingAndGlyphs">20.00</text>
<text x="8" y="357.8" font-size="10.5" fill="#b41238" textLength="27" lengthAdjust="spacingAndGlyphs">33.00</text>
<text x="8" y="444.5" font-size="10.5" fill="#00e0e0" textLength="27" lengthAdjust="spacingAndGlyphs">25.00</text>
<text x="47.0" y="501.1" font-size="10.2" fill="#fff" textLength="36.6" lengthAdjust="spacingAndGlyphs">15:41:05</text>
<text x="132.13333333333333" y="502.1" font-size="10" fill="#fff" textLength="40.5" lengthAdjust="spacingAndGlyphs">15:48:53</text>
<text x="217.46666666666667" y="502.1" font-size="10" fill="#fff" textLength="40.8" lengthAdjust="spacingAndGlyphs">15:50:44</text>
<text x="8" y="295" font-size="10" fill="#fff" textLength="106" lengthAdjust="spacingAndGlyphs">111222 - Water_Station</text>
<text x="302.5" y="295" font-size="10" fill="#fff" text-anchor="end" textLength="43" lengthAdjust="spacingAndGlyphs">A07 - A07</text>
<rect x="244" y="307" width="55.5" height="28" fill="#636363"/>
<text x="271.75" y="329.5" font-size="21.5" fill="#fff" text-anchor="middle" textLength="52" lengthAdjust="spacingAndGlyphs">29.18</text>
<text x="300" y="504.5" font-size="10" fill="#fff" text-anchor="end">4</text>
</svg></div>
<div class="panel" style="left:310px;top:281px"><svg width="309" height="227" viewBox="310 281 309 227">
<circle cx="464" cy="394.3" r="22.3" fill="none" stroke="#fff" stroke-width="1.45"/>
<circle cx="464" cy="394.3" r="44.6" fill="none" stroke="#fff" stroke-width="1.45"/>
<circle cx="464" cy="394.3" r="67" fill="none" stroke="#fff" stroke-width="1.45"/>
<circle cx="464" cy="394.3" r="90.7" fill="none" stroke="#fff" stroke-width="1.45"/>
<circle cx="464" cy="394.3" r="80" fill="none" stroke="#e00000" stroke-width="1.2" stroke-dasharray="9,4"/>
<line x1="373" y1="394.3" x2="555" y2="394.3" stroke="#e8e8e8" stroke-width="1.2"/>
<line x1="464" y1="303.3" x2="464" y2="485.3" stroke="#e8e8e8" stroke-width="1.2"/>
<circle cx="464" cy="394.3" r="10.7" fill="none" stroke="#2a5ce0" stroke-width="1"/>
<path d="M464,394.3 L491.05,332.68 A67.3,67.3 0 0 1 505.43,341.27 Z" fill="#32cd32"/>
<text x="317.5" y="295" font-size="10" fill="#fff" textLength="106" lengthAdjust="spacingAndGlyphs">111222 - Water_Station</text>
<rect x="317.5" y="303.5" width="13" height="12.5" fill="#ff0000"/>
<text x="333.0" y="313.5" font-size="10" fill="#fff" textLength="45" lengthAdjust="spacingAndGlyphs">(H) : 80.00</text>
<rect x="553.6" y="307" width="55.5" height="28" fill="#636363"/>
<text x="581.35" y="329.5" font-size="21.5" fill="#fff" text-anchor="middle" textLength="52" lengthAdjust="spacingAndGlyphs">66.82</text>
<text x="464" y="499.5" font-size="10" fill="#fff" text-anchor="middle" textLength="90.5" lengthAdjust="spacingAndGlyphs">20/03/2013 15:57:45</text>
<text x="609.5" y="504.5" font-size="10" fill="#fff" text-anchor="end">5</text>
<rect x="320.5" y="476.7" width="55.5" height="27.5" fill="#636363"/>
<text x="348.3" y="499" font-size="21.5" fill="#fff" text-anchor="middle" textLength="52" lengthAdjust="spacingAndGlyphs">30.87</text>
<text x="343.5" y="393.3" font-size="23.5" fill="#b4b4b4" textLength="272.5" lengthAdjust="spacingAndGlyphs" fill-opacity="0.78">easemind.en.alibaba.com</text>
</svg></div>
<div class="panel" style="left:620px;top:281px"><svg width="309" height="227" viewBox="620 281 309 227">
<line x1="666.5" y1="321.75" x2="922.5" y2="321.75" stroke="#8c8c8c" stroke-width="0.8" stroke-dasharray="1.6,2.7"/>
<line x1="666.5" y1="340.00" x2="922.5" y2="340.00" stroke="#8c8c8c" stroke-width="0.8" stroke-dasharray="1.6,2.7"/>
<line x1="666.5" y1="358.25" x2="922.5" y2="358.25" stroke="#8c8c8c" stroke-width="0.8" stroke-dasharray="1.6,2.7"/>
<line x1="666.5" y1="376.50" x2="922.5" y2="376.50" stroke="#8c8c8c" stroke-width="0.8" stroke-dasharray="1.6,2.7"/>
<line x1="666.5" y1="394.75" x2="922.5" y2="394.75" stroke="#8c8c8c" stroke-width="0.8" stroke-dasharray="1.6,2.7"/>
<line x1="666.5" y1="413.00" x2="922.5" y2="413.00" stroke="#8c8c8c" stroke-width="0.8" stroke-dasharray="1.6,2.7"/>
<line x1="666.5" y1="431.25" x2="922.5" y2="431.25" stroke="#8c8c8c" stroke-width="0.8" stroke-dasharray="1.6,2.7"/>
<line x1="666.5" y1="449.50" x2="922.5" y2="449.50" stroke="#8c8c8c" stroke-width="0.8" stroke-dasharray="1.6,2.7"/>
<line x1="666.5" y1="467.75" x2="922.5" y2="467.75" stroke="#8c8c8c" stroke-width="0.8" stroke-dasharray="1.6,2.7"/>
<line x1="751.83" y1="303.5" x2="751.83" y2="486" stroke="#8c8c8c" stroke-width="0.8" stroke-dasharray="1.6,2.7"/>
<line x1="837.17" y1="303.5" x2="837.17" y2="486" stroke="#8c8c8c" stroke-width="0.8" stroke-dasharray="1.6,2.7"/>
<rect x="666.5" y="303.5" width="256.0" height="182.5" fill="none" stroke="#9a9a9a" stroke-width="1"/>
<path d="M666.30,486 L666.30,373 L670.57,400.5 L674.84,410.5 L679.11,420 L683.38,401.8 L687.65,395 L691.92,409.3 L696.19,414.5 L700.46,419.3 L704.73,413.5 L709.00,410 L713.27,403 L717.54,401 L721.81,396.3 L726.08,391.8 L730.35,381.8 L734.62,364.3 L738.89,346.8 L743.16,338.8 L747.43,348 L751.70,356.8 L755.97,365.5 L760.24,373 L764.51,391 L768.78,385.5 L773.05,379.3 L777.32,373.8 L781.59,394.3 L785.86,411.8 L790.13,415.5 L794.40,424.3 L798.67,439.3 L802.94,442.5 L807.21,448 L811.48,438 L815.75,426.8 L820.02,411.8 L824.29,404.3 L828.56,403.5 L832.83,411.8 L837.10,420 L841.37,401.8 L845.64,395 L849.91,408.8 L854.18,414.3 L858.45,419.3 L862.72,413.5 L866.99,410 L871.26,404.3 L875.53,401.3 L879.80,409.3 L884.07,414.3 L888.34,419.3 L892.61,412.5 L896.88,409.3 L901.15,404.3 L905.42,401 L909.69,396 L913.96,393 L918.23,410.5 L918.23,486 Z" fill="#008000"/>
<path d="M734.62,486 L734.62,364.3 L738.89,346.8 L743.16,338.8 L747.43,348 L747.43,486 Z" fill="#ff0000"/>
<path d="M794.40,486 L794.40,424.3 L798.67,439.3 L802.94,442.5 L807.21,448 L811.48,438 L811.48,486 Z" fill="#2ab9cf"/>
<line x1="666.5" y1="348.7" x2="922.5" y2="348.7" stroke="#ff0000" stroke-width="1.6"/>
<line x1="666.5" y1="435" x2="922.5" y2="435" stroke="#2ab9cf" stroke-width="1.8"/>
<text x="627" y="310.1" font-size="10" fill="#fff" textLength="24.3" lengthAdjust="spacingAndGlyphs">40.00</text>
<text x="627" y="345.90000000000003" font-size="10" fill="#fff" textLength="24.3" lengthAdjust="spacingAndGlyphs">36.00</text>
<text x="627" y="382.6" font-size="10" fill="#fff" textLength="24.3" lengthAdjust="spacingAndGlyphs">32.00</text>
<text x="627" y="419.6" font-size="10" fill="#fff" textLength="24.3" lengthAdjust="spacingAndGlyphs">28.00</text>
<text x="627" y="455.90000000000003" font-size="10" fill="#fff" textLength="24.3" lengthAdjust="spacingAndGlyphs">24.00</text>
<text x="627" y="487.1" font-size="10" fill="#fff" textLength="24.3" lengthAdjust="spacingAndGlyphs">20.00</text>
<text x="627" y="360.8" font-size="10.5" fill="#e00000" textLength="27" lengthAdjust="spacingAndGlyphs">35.00</text>
<text x="627" y="447.3" font-size="10.5" fill="#2ab4c6" textLength="27" lengthAdjust="spacingAndGlyphs">25.50</text>
<text x="667.0" y="501.1" font-size="10.2" fill="#fff" textLength="36.6" lengthAdjust="spacingAndGlyphs">15:41:05</text>
<text x="752.1333333333333" y="502.1" font-size="10" fill="#fff" textLength="40.5" lengthAdjust="spacingAndGlyphs">15:48:53</text>
<text x="837.4666666666666" y="502.1" font-size="10" fill="#fff" textLength="40.8" lengthAdjust="spacingAndGlyphs">15:50:44</text>
<text x="627" y="295" font-size="10" fill="#fff" textLength="106" lengthAdjust="spacingAndGlyphs">111222 - Water_Station</text>
<text x="923" y="295" font-size="10" fill="#fff" text-anchor="end" textLength="43" lengthAdjust="spacingAndGlyphs">A12 - A12</text>
<rect x="864.3" y="307" width="55.5" height="28" fill="#636363"/>
<text x="892.05" y="329.5" font-size="21.5" fill="#fff" text-anchor="middle" textLength="52" lengthAdjust="spacingAndGlyphs">28.25</text>
<text x="920" y="504.5" font-size="10" fill="#fff" text-anchor="end">6</text>
</svg></div>
<div class="panel" style="left:0px;top:509px"><svg width="309" height="227" viewBox="0 509 309 227">
<rect x="140.5" y="530.7" width="29.2" height="35.86" fill="#800040"/>
<rect x="140.5" y="566.56" width="29.2" height="107.58" fill="#008040"/>
<rect x="140.5" y="674.14" width="29.2" height="35.86" fill="#408080"/>
<rect x="140.5" y="674.14" width="29.2" height="5.5" fill="#40a080" fill-opacity="0.45"/>
<line x1="140.5" y1="530.70" x2="169.7" y2="530.70" stroke="#fff" stroke-width="1.5"/>
<text x="109" y="538.4" font-size="10" fill="#fff" textLength="24" lengthAdjust="spacingAndGlyphs">40.00</text>
<line x1="140.5" y1="560.58" x2="169.7" y2="560.58" stroke="#fff" stroke-width="1.5"/>
<text x="109" y="567.9" font-size="10" fill="#fff" textLength="24" lengthAdjust="spacingAndGlyphs">35.83</text>
<line x1="140.5" y1="590.47" x2="169.7" y2="590.47" stroke="#fff" stroke-width="1.5"/>
<text x="109" y="597.6" font-size="10" fill="#fff" textLength="24" lengthAdjust="spacingAndGlyphs">31.66</text>
<line x1="140.5" y1="620.35" x2="169.7" y2="620.35" stroke="#fff" stroke-width="1.5"/>
<text x="109" y="627.4" font-size="10" fill="#fff" textLength="24" lengthAdjust="spacingAndGlyphs">27.50</text>
<line x1="140.5" y1="650.23" x2="169.7" y2="650.23" stroke="#fff" stroke-width="1.5"/>
<text x="109" y="657.6" font-size="10" fill="#fff" textLength="24" lengthAdjust="spacingAndGlyphs">23.33</text>
<line x1="140.5" y1="680.12" x2="169.7" y2="680.12" stroke="#fff" stroke-width="1.5"/>
<text x="109" y="687.4" font-size="10" fill="#fff" textLength="24" lengthAdjust="spacingAndGlyphs">19.16</text>
<line x1="140.5" y1="710.00" x2="169.7" y2="710.00" stroke="#fff" stroke-width="1.5"/>
<text x="109" y="713.4" font-size="10" fill="#fff" textLength="24" lengthAdjust="spacingAndGlyphs">15.00</text>
<rect x="177.8" y="528.3" width="2.2" height="184.7" fill="#fff"/>
<rect x="148" y="612" width="29" height="5.4" fill="#5a005a"/>
<text x="8" y="523" font-size="10" fill="#fff" textLength="106" lengthAdjust="spacingAndGlyphs">111222 - Water_Station</text>
<text x="302.5" y="523" font-size="10" fill="#fff" text-anchor="end" textLength="43" lengthAdjust="spacingAndGlyphs">A08 - A08</text>
<rect x="8" y="531.5" width="13" height="12.5" fill="#800040"/>
<text x="23.5" y="541.5" font-size="10" fill="#fff" textLength="45" lengthAdjust="spacingAndGlyphs">(H) : 35.00</text>
<rect x="8" y="546.5" width="13" height="12.5" fill="#408080"/>
<text x="23.5" y="556.5" font-size="10" fill="#fff" textLength="45" lengthAdjust="spacingAndGlyphs">(L ) : 20.00</text>
<rect x="244" y="535" width="55.5" height="28" fill="#636363"/>
<text x="271.75" y="557.5" font-size="21.5" fill="#fff" text-anchor="middle" textLength="52" lengthAdjust="spacingAndGlyphs">28.31</text>
<text x="154" y="727.8" font-size="10" fill="#fff" text-anchor="middle" textLength="90.5" lengthAdjust="spacingAndGlyphs">20/03/2013 15:57:45</text>
<text x="300" y="732.5" font-size="10" fill="#fff" text-anchor="end">7</text>
</svg></div>
<div class="panel" style="left:310px;top:509px"><svg width="309" height="227" viewBox="310 509 309 227">
<path d="M463.8,707 L317.00,707.00 A146.8,146.8 0 0 1 349.93,614.36 Z" fill="#0000ff"/>
<path d="M463.8,707 L349.93,614.36 A146.8,146.8 0 0 1 577.67,614.36 Z" fill="#008000"/>
<path d="M463.8,707 L577.67,614.36 A146.8,146.8 0 0 1 610.60,707.00 Z" fill="#800040"/>
<path d="M317.00,707.00 A146.8,146.8 0 0 1 610.60,707.00" fill="none" stroke="#fff" stroke-width="1.4"/>
<line x1="317.00" y1="707.00" x2="338.00" y2="707.00" stroke="#fff" stroke-width="1.5"/>
<line x1="319.23" y1="681.51" x2="327.60" y2="682.98" stroke="#fff" stroke-width="1.3"/>
<line x1="325.85" y1="656.79" x2="333.84" y2="659.70" stroke="#fff" stroke-width="1.3"/>
<line x1="336.67" y1="633.60" x2="353.12" y2="643.10" stroke="#fff" stroke-width="1.5"/>
<line x1="351.34" y1="612.64" x2="357.86" y2="618.10" stroke="#fff" stroke-width="1.3"/>
<line x1="369.44" y1="594.54" x2="374.90" y2="601.06" stroke="#fff" stroke-width="1.3"/>
<line x1="390.40" y1="579.87" x2="399.90" y2="596.32" stroke="#fff" stroke-width="1.5"/>
<line x1="413.59" y1="569.05" x2="416.50" y2="577.04" stroke="#fff" stroke-width="1.3"/>
<line x1="438.31" y1="562.43" x2="439.78" y2="570.80" stroke="#fff" stroke-width="1.3"/>
<line x1="463.80" y1="560.20" x2="463.80" y2="579.20" stroke="#fff" stroke-width="1.5"/>
<line x1="489.29" y1="562.43" x2="487.82" y2="570.80" stroke="#fff" stroke-width="1.3"/>
<line x1="514.01" y1="569.05" x2="511.10" y2="577.04" stroke="#fff" stroke-width="1.3"/>
<line x1="537.20" y1="579.87" x2="527.70" y2="596.32" stroke="#fff" stroke-width="1.5"/>
<line x1="558.16" y1="594.54" x2="552.70" y2="601.06" stroke="#fff" stroke-width="1.3"/>
<line x1="576.26" y1="612.64" x2="569.74" y2="618.10" stroke="#fff" stroke-width="1.3"/>
<line x1="590.93" y1="633.60" x2="574.48" y2="643.10" stroke="#fff" stroke-width="1.5"/>
<line x1="601.75" y1="656.79" x2="593.76" y2="659.70" stroke="#fff" stroke-width="1.3"/>
<line x1="608.37" y1="681.51" x2="600.00" y2="682.98" stroke="#fff" stroke-width="1.3"/>
<line x1="610.60" y1="707.00" x2="589.60" y2="707.00" stroke="#fff" stroke-width="1.5"/>
<text x="463.5" y="591.6" font-size="10" fill="#fff" text-anchor="middle" textLength="24" lengthAdjust="spacingAndGlyphs">26.50</text>
<text x="412" y="608.3000000000001" font-size="10" fill="#fff" text-anchor="middle" textLength="24" lengthAdjust="spacingAndGlyphs">22.66</text>
<text x="514.5" y="608.3000000000001" font-size="10" fill="#fff" text-anchor="middle" textLength="24" lengthAdjust="spacingAndGlyphs">30.33</text>
<text x="366.5" y="653.9" font-size="10" fill="#fff" text-anchor="middle" textLength="24" lengthAdjust="spacingAndGlyphs">18.83</text>
<text x="561" y="654.6" font-size="10" fill="#fff" text-anchor="middle" textLength="24" lengthAdjust="spacingAndGlyphs">34.16</text>
<text x="350" y="704.2" font-size="10" fill="#fff" text-anchor="middle" textLength="24" lengthAdjust="spacingAndGlyphs">15.00</text>
<text x="578.2" y="704.2" font-size="10" fill="#fff" text-anchor="middle" textLength="24" lengthAdjust="spacingAndGlyphs">38.00</text>
<path d="M414.16,587.39 L460.84,708.23 L466.76,705.77 Z" fill="#000" stroke="#fff" stroke-width="0.75" stroke-linejoin="round"/>
<circle cx="463.8" cy="707" r="2.4" fill="#000" stroke="#fff" stroke-width="1"/>
<text x="317.5" y="523" font-size="10" fill="#fff" textLength="106" lengthAdjust="spacingAndGlyphs">111222 - Water_Station</text>
<text x="612" y="523" font-size="10" fill="#fff" text-anchor="end" textLength="43" lengthAdjust="spacingAndGlyphs">A09 - A09</text>
<rect x="317.5" y="531.5" width="13" height="12.5" fill="#800040"/>
<text x="333.0" y="541.5" font-size="10" fill="#fff" textLength="45" lengthAdjust="spacingAndGlyphs">(H) : 33.00</text>
<rect x="317.5" y="546.5" width="13" height="12.5" fill="#0000ff"/>
<text x="333.0" y="556.5" font-size="10" fill="#fff" textLength="45" lengthAdjust="spacingAndGlyphs">(L ) : 20.00</text>
<rect x="553.6" y="535" width="55.5" height="28" fill="#636363"/>
<text x="581.35" y="557.5" font-size="21.5" fill="#fff" text-anchor="middle" textLength="52" lengthAdjust="spacingAndGlyphs">23.62</text>
<text x="464" y="725" font-size="10" fill="#fff" text-anchor="middle" textLength="90.5" lengthAdjust="spacingAndGlyphs">20/03/2013 15:57:45</text>
<text x="609.5" y="732.5" font-size="10" fill="#fff" text-anchor="end">8</text>
</svg></div>
<div class="panel" style="left:620px;top:509px"><svg width="309" height="227" viewBox="620 509 309 227">
<rect x="764.5" y="529.8" width="19.6" height="184.2" rx="5.5" fill="#747474"/>
<rect x="769.6" y="535" width="9.4" height="174.6" rx="1.5" fill="#f2efea"/>
<rect x="771.6" y="620" width="5.4" height="89.4" fill="#32cd32"/>
<text x="732.8" y="538.3" font-size="10" fill="#fff" textLength="24.3" lengthAdjust="spacingAndGlyphs">40.00</text>
<text x="732.8" y="572.6" font-size="10" fill="#fff" textLength="24.3" lengthAdjust="spacingAndGlyphs">35.00</text>
<text x="732.8" y="607.3" font-size="10" fill="#fff" textLength="24.3" lengthAdjust="spacingAndGlyphs">30.00</text>
<text x="732.8" y="641.6999999999999" font-size="10" fill="#fff" textLength="24.3" lengthAdjust="spacingAndGlyphs">25.00</text>
<text x="732.8" y="675.9" font-size="10" fill="#fff" textLength="24.3" lengthAdjust="spacingAndGlyphs">20.00</text>
<text x="732.8" y="710.6999999999999" font-size="10" fill="#fff" textLength="24.3" lengthAdjust="spacingAndGlyphs">15.00</text>
<text x="627" y="523" font-size="10" fill="#fff" textLength="106" lengthAdjust="spacingAndGlyphs">111222 - Water_Station</text>
<text x="923" y="523" font-size="10" fill="#fff" text-anchor="end" textLength="43" lengthAdjust="spacingAndGlyphs">A10 - A10</text>
<rect x="627" y="531.5" width="13" height="12.5" fill="#ff0000"/>
<text x="642.5" y="541.5" font-size="10" fill="#fff" textLength="45" lengthAdjust="spacingAndGlyphs">(H) : 35.00</text>
<rect x="627" y="546.5" width="13" height="12.5" fill="#3c6fdc"/>
<text x="642.5" y="556.5" font-size="10" fill="#fff" textLength="45" lengthAdjust="spacingAndGlyphs">(L ) : 20.00</text>
<rect x="864.3" y="535" width="55.5" height="28" fill="#636363"/>
<text x="892.05" y="557.5" font-size="21.5" fill="#fff" text-anchor="middle" textLength="52" lengthAdjust="spacingAndGlyphs">27.91</text>
<text x="774" y="728" font-size="10" fill="#fff" text-anchor="middle" textLength="90.5" lengthAdjust="spacingAndGlyphs">20/03/2013 15:57:45</text>
<text x="920" y="732.5" font-size="10" fill="#fff" text-anchor="end">9</text>
</svg></div>
<div id="edgeL"></div><div id="edgeR"></div>
<div class="ledcol"><svg width="28" height="683" viewBox="931 53 28 683">
<defs><linearGradient id="ring" x1="0" y1="0" x2="0" y2="1"><stop offset="0" stop-color="#ffffff"/><stop offset="0.55" stop-color="#f0f0f0"/><stop offset="0.8" stop-color="#8c8c8c"/><stop offset="1" stop-color="#e8e8e8"/></linearGradient><radialGradient id="lg" cx="0.45" cy="0.4" r="0.65"><stop offset="0" stop-color="#7cf060"/><stop offset="0.6" stop-color="#4cd03c"/><stop offset="1" stop-color="#2a9a22"/></radialGradient><radialGradient id="lx" cx="0.45" cy="0.4" r="0.65"><stop offset="0" stop-color="#b0b0b0"/><stop offset="0.6" stop-color="#8e8e8e"/><stop offset="1" stop-color="#5a5a5a"/></radialGradient></defs>
<circle cx="945.7" cy="89.6" r="11.3" fill="url(#ring)"/>
<circle cx="945.7" cy="89.1" r="8.6" fill="#222"/>
<circle cx="945.7" cy="89.1" r="8.1" fill="url(#lg)"/>
<ellipse cx="942.7" cy="86.0" rx="1.3" ry="0.9" fill="#fff" fill-opacity="0.85"/>
<ellipse cx="949.3000000000001" cy="85.39999999999999" rx="1.5" ry="0.9" fill="#fff" fill-opacity="0.35" transform="rotate(35 949.3000000000001 85.39999999999999)"/>
<path d="M939.2,93.1 Q945.7,96.1 949.7,91.1 Q952.2,89.1 953.3000000000001,90.6 Q951.7,96.6 945.7,97.19999999999999 Q941.2,96.6 939.2,93.1 Z" fill="#fff" fill-opacity="0.28"/>
<line x1="931" y1="128.5" x2="959" y2="128.5" stroke="#383838" stroke-width="1"/>
<circle cx="945.7" cy="165.5" r="11.3" fill="url(#ring)"/>
<circle cx="945.7" cy="165.0" r="8.6" fill="#222"/>
<circle cx="945.7" cy="165.0" r="8.1" fill="url(#lx)"/>
<ellipse cx="942.7" cy="161.9" rx="1.3" ry="0.9" fill="#fff" fill-opacity="0.85"/>
<ellipse cx="949.3000000000001" cy="161.3" rx="1.5" ry="0.9" fill="#fff" fill-opacity="0.35" transform="rotate(35 949.3000000000001 161.3)"/>
<path d="M939.2,169.0 Q945.7,172.0 949.7,167.0 Q952.2,165.0 953.3000000000001,166.5 Q951.7,172.5 945.7,173.1 Q941.2,172.5 939.2,169.0 Z" fill="#fff" fill-opacity="0.28"/>
<line x1="931" y1="204.5" x2="959" y2="204.5" stroke="#383838" stroke-width="1"/>
<circle cx="945.7" cy="241.4" r="11.3" fill="url(#ring)"/>
<circle cx="945.7" cy="240.9" r="8.6" fill="#222"/>
<circle cx="945.7" cy="240.9" r="8.1" fill="url(#lx)"/>
<ellipse cx="942.7" cy="237.8" rx="1.3" ry="0.9" fill="#fff" fill-opacity="0.85"/>
<ellipse cx="949.3000000000001" cy="237.20000000000002" rx="1.5" ry="0.9" fill="#fff" fill-opacity="0.35" transform="rotate(35 949.3000000000001 237.20000000000002)"/>
<path d="M939.2,244.9 Q945.7,247.9 949.7,242.9 Q952.2,240.9 953.3000000000001,242.4 Q951.7,248.4 945.7,249.0 Q941.2,248.4 939.2,244.9 Z" fill="#fff" fill-opacity="0.28"/>
<line x1="931" y1="280.5" x2="959" y2="280.5" stroke="#383838" stroke-width="1"/>
<circle cx="945.7" cy="317.3" r="11.3" fill="url(#ring)"/>
<circle cx="945.7" cy="316.8" r="8.6" fill="#222"/>
<circle cx="945.7" cy="316.8" r="8.1" fill="url(#lx)"/>
<ellipse cx="942.7" cy="313.7" rx="1.3" ry="0.9" fill="#fff" fill-opacity="0.85"/>
<ellipse cx="949.3000000000001" cy="313.1" rx="1.5" ry="0.9" fill="#fff" fill-opacity="0.35" transform="rotate(35 949.3000000000001 313.1)"/>
<path d="M939.2,320.8 Q945.7,323.8 949.7,318.8 Q952.2,316.8 953.3000000000001,318.3 Q951.7,324.3 945.7,324.90000000000003 Q941.2,324.3 939.2,320.8 Z" fill="#fff" fill-opacity="0.28"/>
<line x1="931" y1="356.5" x2="959" y2="356.5" stroke="#383838" stroke-width="1"/>
<circle cx="945.7" cy="393.20000000000005" r="11.3" fill="url(#ring)"/>
<circle cx="945.7" cy="392.70000000000005" r="8.6" fill="#222"/>
<circle cx="945.7" cy="392.70000000000005" r="8.1" fill="url(#lg)"/>
<ellipse cx="942.7" cy="389.6" rx="1.3" ry="0.9" fill="#fff" fill-opacity="0.85"/>
<ellipse cx="949.3000000000001" cy="389.00000000000006" rx="1.5" ry="0.9" fill="#fff" fill-opacity="0.35" transform="rotate(35 949.3000000000001 389.00000000000006)"/>
<path d="M939.2,396.70000000000005 Q945.7,399.70000000000005 949.7,394.70000000000005 Q952.2,392.70000000000005 953.3000000000001,394.20000000000005 Q951.7,400.20000000000005 945.7,400.80000000000007 Q941.2,400.20000000000005 939.2,396.70000000000005 Z" fill="#fff" fill-opacity="0.28"/>
<line x1="931" y1="431.5" x2="959" y2="431.5" stroke="#383838" stroke-width="1"/>
<circle cx="945.7" cy="469.1" r="11.3" fill="url(#ring)"/>
<circle cx="945.7" cy="468.6" r="8.6" fill="#222"/>
<circle cx="945.7" cy="468.6" r="8.1" fill="url(#lg)"/>
<ellipse cx="942.7" cy="465.5" rx="1.3" ry="0.9" fill="#fff" fill-opacity="0.85"/>
<ellipse cx="949.3000000000001" cy="464.90000000000003" rx="1.5" ry="0.9" fill="#fff" fill-opacity="0.35" transform="rotate(35 949.3000000000001 464.90000000000003)"/>
<path d="M939.2,472.6 Q945.7,475.6 949.7,470.6 Q952.2,468.6 953.3000000000001,470.1 Q951.7,476.1 945.7,476.70000000000005 Q941.2,476.1 939.2,472.6 Z" fill="#fff" fill-opacity="0.28"/>
<line x1="931" y1="507.5" x2="959" y2="507.5" stroke="#383838" stroke-width="1"/>
<circle cx="945.7" cy="545.0" r="11.3" fill="url(#ring)"/>
<circle cx="945.7" cy="544.5" r="8.6" fill="#222"/>
<circle cx="945.7" cy="544.5" r="8.1" fill="url(#lg)"/>
<ellipse cx="942.7" cy="541.4" rx="1.3" ry="0.9" fill="#fff" fill-opacity="0.85"/>
<ellipse cx="949.3000000000001" cy="540.8" rx="1.5" ry="0.9" fill="#fff" fill-opacity="0.35" transform="rotate(35 949.3000000000001 540.8)"/>
<path d="M939.2,548.5 Q945.7,551.5 949.7,546.5 Q952.2,544.5 953.3000000000001,546.0 Q951.7,552.0 945.7,552.6 Q941.2,552.0 939.2,548.5 Z" fill="#fff" fill-opacity="0.28"/>
<line x1="931" y1="583.5" x2="959" y2="583.5" stroke="#383838" stroke-width="1"/>
<circle cx="945.7" cy="620.9000000000001" r="11.3" fill="url(#ring)"/>
<circle cx="945.7" cy="620.4000000000001" r="8.6" fill="#222"/>
<circle cx="945.7" cy="620.4000000000001" r="8.1" fill="url(#lg)"/>
<ellipse cx="942.7" cy="617.3000000000001" rx="1.3" ry="0.9" fill="#fff" fill-opacity="0.85"/>
<ellipse cx="949.3000000000001" cy="616.7" rx="1.5" ry="0.9" fill="#fff" fill-opacity="0.35" transform="rotate(35 949.3000000000001 616.7)"/>
<path d="M939.2,624.4000000000001 Q945.7,627.4000000000001 949.7,622.4000000000001 Q952.2,620.4000000000001 953.3000000000001,621.9000000000001 Q951.7,627.9000000000001 945.7,628.5000000000001 Q941.2,627.9000000000001 939.2,624.4000000000001 Z" fill="#fff" fill-opacity="0.28"/>
<line x1="931" y1="659.5" x2="959" y2="659.5" stroke="#383838" stroke-width="1"/>
<circle cx="945.7" cy="696.8000000000001" r="11.3" fill="url(#ring)"/>
<circle cx="945.7" cy="696.3000000000001" r="8.6" fill="#222"/>
<circle cx="945.7" cy="696.3000000000001" r="8.1" fill="url(#lg)"/>
<ellipse cx="942.7" cy="693.2" rx="1.3" ry="0.9" fill="#fff" fill-opacity="0.85"/>
<ellipse cx="949.3000000000001" cy="692.6" rx="1.5" ry="0.9" fill="#fff" fill-opacity="0.35" transform="rotate(35 949.3000000000001 692.6)"/>
<path d="M939.2,700.3000000000001 Q945.7,703.3000000000001 949.7,698.3000000000001 Q952.2,696.3000000000001 953.3000000000001,697.8000000000001 Q951.7,703.8000000000001 945.7,704.4000000000001 Q941.2,703.8000000000001 939.2,700.3000000000001 Z" fill="#fff" fill-opacity="0.28"/>
</svg></div>
<div id="footer"><svg width="960" height="32" viewBox="0 736 960 32">
<defs><radialGradient id="sph" cx="0.5" cy="0.82" r="0.8"><stop offset="0" stop-color="#e4f2ff"/><stop offset="0.3" stop-color="#8cc0fa"/><stop offset="0.62" stop-color="#3c88f0"/><stop offset="1" stop-color="#1c48c0"/></radialGradient><linearGradient id="sphh" x1="0" y1="0" x2="0" y2="1"><stop offset="0" stop-color="#fff" stop-opacity="0.95"/><stop offset="1" stop-color="#fff" stop-opacity="0.15"/></linearGradient></defs>
<circle cx="16.6" cy="758.25" r="6.7" fill="none" stroke="#3b78e8" stroke-width="1.7"/>
<path d="M16.6,754.2 V758.5 H19.9" fill="none" stroke="#3b78e8" stroke-width="1.7"/>
<text x="38" y="762" font-size="10" fill="#f2f2f2" textLength="87" lengthAdjust="spacingAndGlyphs">20/03/2013 16:01:01</text>
<circle cx="174" cy="758" r="8" fill="url(#sph)"/>
<ellipse cx="174" cy="754.2" rx="5.4" ry="3" fill="url(#sphh)"/>
<text x="187.8" y="762" font-size="10" fill="#f2f2f2" textLength="49.8" lengthAdjust="spacingAndGlyphs">Direct Mode</text>
<text x="501.3" y="760.3" font-size="12" fill="#fff" text-anchor="middle" textLength="36.5" lengthAdjust="spacingAndGlyphs" font-weight="bold">Page 1</text>
<g fill="none" stroke-linecap="round"><path d="M816,748.8 Q822,747.2 831,748.8 Q839,751 843.6,756.4" stroke="#e6e6e6" stroke-width="1.2"/><path d="M816,748.8 Q818,750.4 821,750.8 Q834,751.2 841.2,756" stroke="#d8d8d8" stroke-width="1.1"/><path d="M819.8,752.6 Q820.5,754.2 823,754.6 Q829.5,755 833.2,757.4" stroke="#d0d0d0" stroke-width="1.1"/></g>
<text x="825.5" y="763.2" font-size="8.8" fill="#f4f4f4" textLength="53" lengthAdjust="spacingAndGlyphs" font-weight="bold" font-style="italic" font-family="'Liberation Serif', serif">EaseMind</text>
<text x="892" y="762" font-size="10" fill="#e8e8e8" textLength="58" lengthAdjust="spacingAndGlyphs">Version : 2.3.6</text>
</svg></div>
<div id="tip"><span>User Profile Setting Display</span></div>
</body></html>
